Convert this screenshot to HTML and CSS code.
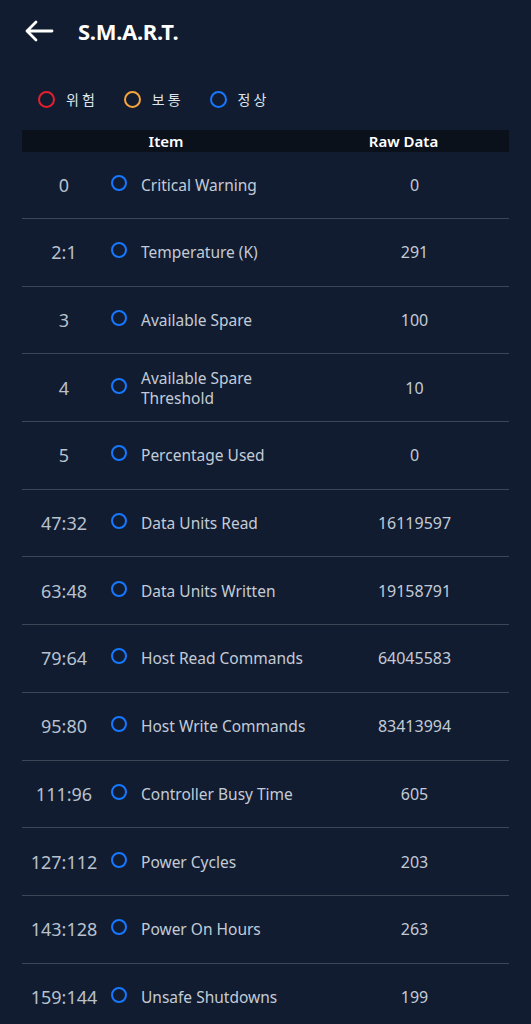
FILE: index.html
```html
<!DOCTYPE html>
<html lang="ko">
<head>
    <meta charset="UTF-8">
    <meta name="viewport" content="width=device-width, initial-scale=1.0">
    <title>S.M.A.R.T.</title>
    <link rel="stylesheet" href="styles.css">
</head>
<body>
    <header class="top-bar">
        <svg class="back-icon" width="30" height="22" viewBox="0 0 30 22">
            <path d="M28 11H3M12 2L3 11l9 9" fill="none" stroke="#fff" stroke-width="2.8" stroke-linecap="round" stroke-linejoin="round"/>
        </svg>
        <h1>S.M.A.R.T.</h1>
    </header>

    <div class="legend">
        <div class="legend-item"><span class="dot danger"></span>위험</div>
        <div class="legend-item"><span class="dot warn"></span>보통</div>
        <div class="legend-item"><span class="dot ok"></span>정상</div>
    </div>

    <div class="smart-table">
        <div class="table-head">
            <div>Item</div>
            <div>Raw Data</div>
        </div>

        <div class="row"><div class="id">0</div><span class="dot ok"></span><div class="name">Critical Warning</div><div class="raw">0</div></div>
        <div class="row"><div class="id">2:1</div><span class="dot ok"></span><div class="name">Temperature (K)</div><div class="raw">291</div></div>
        <div class="row"><div class="id">3</div><span class="dot ok"></span><div class="name">Available Spare</div><div class="raw">100</div></div>
        <div class="row"><div class="id">4</div><span class="dot ok"></span><div class="name">Available Spare<br>Threshold</div><div class="raw">10</div></div>
        <div class="row"><div class="id">5</div><span class="dot ok"></span><div class="name">Percentage Used</div><div class="raw">0</div></div>
        <div class="row"><div class="id">47:32</div><span class="dot ok"></span><div class="name">Data Units Read</div><div class="raw">16119597</div></div>
        <div class="row"><div class="id">63:48</div><span class="dot ok"></span><div class="name">Data Units Written</div><div class="raw">19158791</div></div>
        <div class="row"><div class="id">79:64</div><span class="dot ok"></span><div class="name">Host Read Commands</div><div class="raw">64045583</div></div>
        <div class="row"><div class="id">95:80</div><span class="dot ok"></span><div class="name">Host Write Commands</div><div class="raw">83413994</div></div>
        <div class="row"><div class="id">111:96</div><span class="dot ok"></span><div class="name">Controller Busy Time</div><div class="raw">605</div></div>
        <div class="row"><div class="id">127:112</div><span class="dot ok"></span><div class="name">Power Cycles</div><div class="raw">203</div></div>
        <div class="row"><div class="id">143:128</div><span class="dot ok"></span><div class="name">Power On Hours</div><div class="raw">263</div></div>
        <div class="row"><div class="id">159:144</div><span class="dot ok"></span><div class="name">Unsafe Shutdowns</div><div class="raw">199</div></div>
    </div>
</body>
</html>
```

FILE: styles.css
```css
* {
    margin: 0;
    padding: 0;
    box-sizing: border-box;
}

body {
    font-family: 'Noto Sans', 'Noto Sans CJK KR', sans-serif;
    background: #111c30;
    color: #c3cbd7;
    width: 531px;
    height: 1024px;
    overflow: hidden;
}

.top-bar {
    display: flex;
    align-items: center;
    height: 62px;
    padding-left: 24px;
}

.back-icon {
    display: block;
    margin-right: 24px;
}

.top-bar h1 {
    color: #fff;
    font-size: 22px;
    font-weight: 700;
    letter-spacing: -0.3px;
}

.legend {
    display: flex;
    align-items: center;
    height: 68px;
    padding: 6px 0 0 38px;
}

.legend-item {
    display: flex;
    align-items: center;
    font-family: 'Noto Sans CJK KR', sans-serif;
    font-size: 14px;
    letter-spacing: 3px;
    color: #dfe4ec;
    margin-right: 26px;
}

.legend-item .dot {
    width: 17px;
    height: 17px;
    margin-right: 11px;
}

.dot {
    display: inline-block;
    width: 16px;
    height: 16px;
    border-radius: 50%;
    border: 2.7px solid #1677ff;
    flex-shrink: 0;
}

.dot.danger {
    border-color: #e5202e;
}

.dot.warn {
    border-color: #f4a43b;
}

.dot.ok {
    border-color: #1677ff;
}

.smart-table {
    margin: 0 22px;
}

.table-head {
    display: grid;
    grid-template-columns: 288px 1fr;
    height: 22px;
    background: #0b111b;
    color: #fff;
    font-size: 15px;
    font-weight: 600;
    line-height: 22px;
    text-align: center;
}

.table-head div:last-child {
    padding-right: 12px;
}

.row {
    display: grid;
    grid-template-columns: 84px 35px 179px 1fr;
    align-items: center;
    height: 67.7px;
    border-bottom: 1.5px solid #3b4656;
}

.table-head + .row {
    height: 67px;
}

.row .id {
    text-align: center;
    font-size: 18px;
    color: #b8c1ce;
}

.row .dot {
    justify-self: start;
    margin-left: 5px;
    margin-top: -4px;
}

.row .name {
    font-size: 15.5px;
    line-height: 20px;
    color: #c3cbd7;
}

.row .raw {
    text-align: center;
    font-size: 16px;
    color: #c3cbd7;
}
```
